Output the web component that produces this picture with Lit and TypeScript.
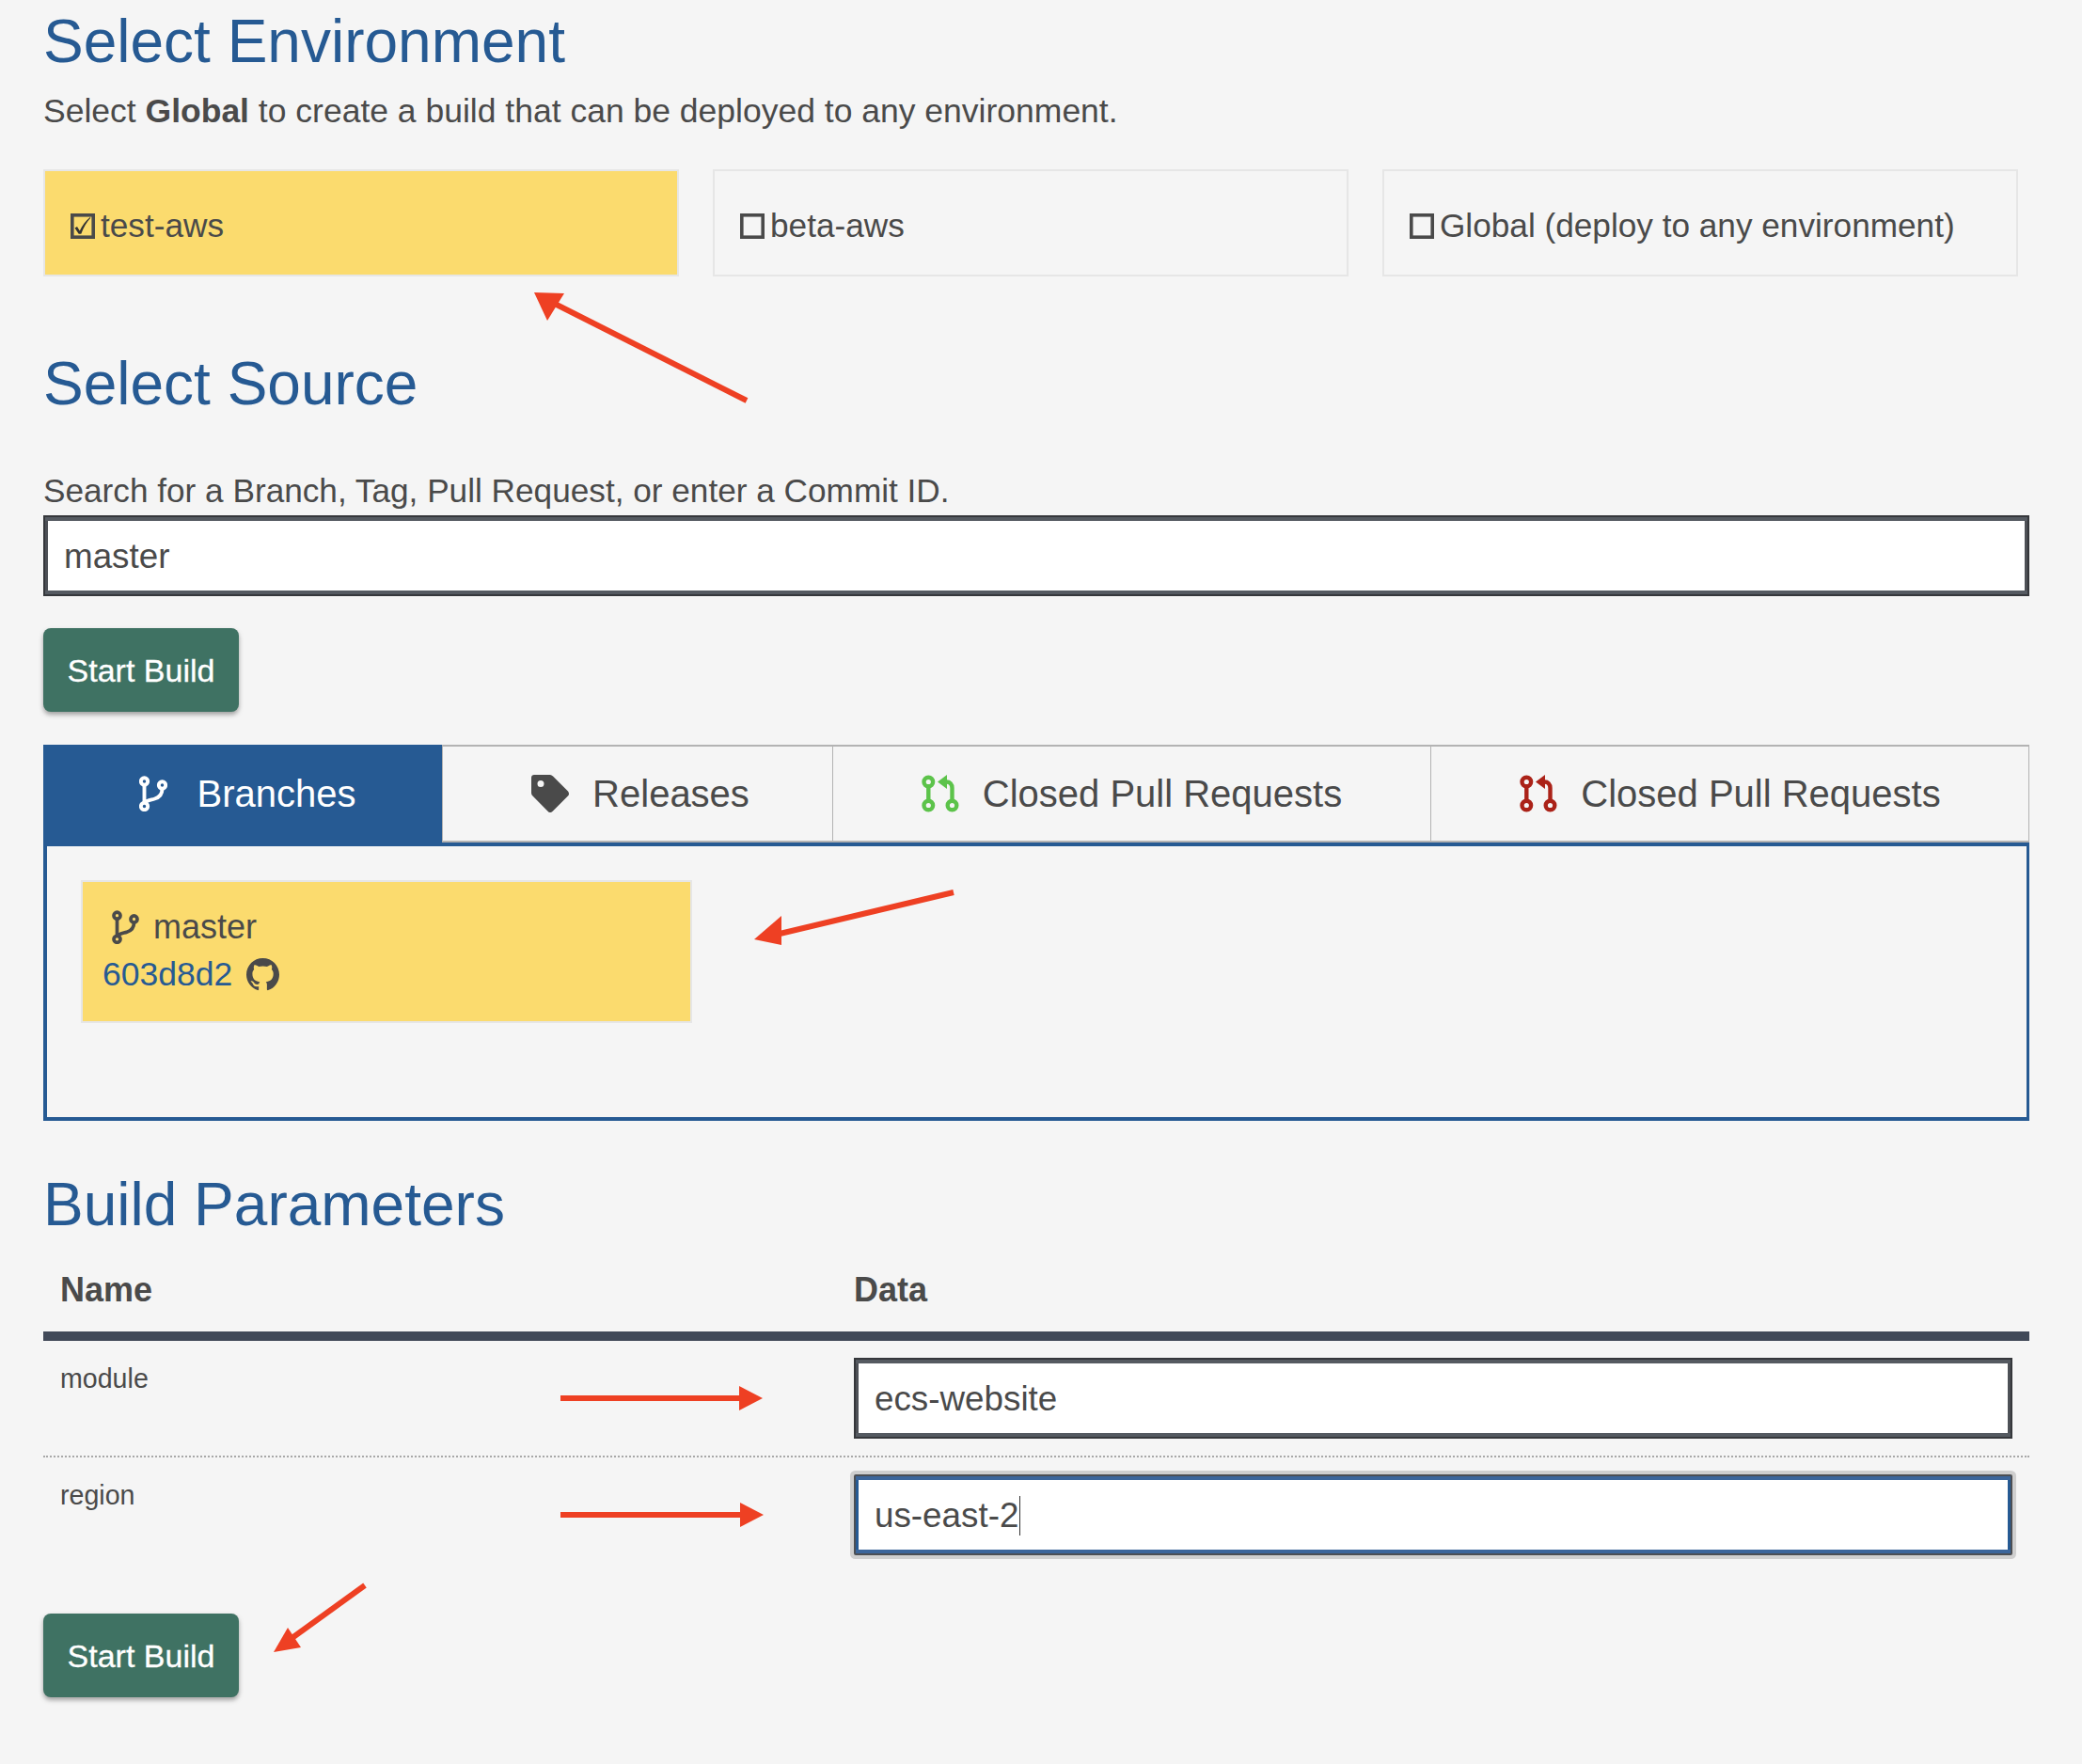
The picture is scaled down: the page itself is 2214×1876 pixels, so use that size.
import { LitElement, html, css, svg } from 'lit';
import { customElement } from 'lit/decorators.js';

const branchIcon = (w = 30, h = 38) => html`<svg class="ico" width=${w} height=${h} viewBox="0 0 30 38" fill="none" stroke="currentColor" stroke-width="3.900">
  <circle cx="5.500" cy="6" r="3.700"/><circle cx="24.500" cy="10" r="3.700"/><circle cx="5.500" cy="32.500" r="3.700"/>
  <path d="M5.500 10v18.500M24.500 14c0 6-3 9-8 10.500-5 1.500-10 2-11 5"/>
</svg>`;

const tagIcon = html`<svg class="ico" width="40" height="40" viewBox="0 0 40 40">
  <path fill="currentColor" fill-rule="evenodd" d="M3 0h17c1 0 2 .5 3 1.500l16 16c1.300 1.400 1.300 3.500.2 4.800L23 38.500c-1.500 2-4 2-5.500.2L1.500 22.500C.5 21.500 0 20.500 0 19V3c0-1.700 1.300-3 3-3zm7 6a3.500 3.500 0 100 7 3.500 3.500 0 000-7z"/>
</svg>`;

const pullIcon = (color: string) => html`<svg class="ico" width="40" height="40" viewBox="0 0 40 40" fill="none" stroke=${color} stroke-width="4.400" style="color:${color}">
  <circle cx="7.300" cy="7.500" r="4.800"/><circle cx="7.300" cy="32.500" r="4.800"/><circle cx="32.500" cy="32.500" r="4.800"/>
  <path d="M7.300 12.300v15.400M32.500 27.700V14c0-4-2.500-6.500-6-6.500h-4"/>
  <path d="M27 0v15l-10-7.500z" fill="currentColor" stroke="none"/>
</svg>`;

const githubIcon = html`<svg class="ico" width="35" height="35" viewBox="0 0 16 16">
  <path fill="currentColor" d="M8 0C3.580 0 0 3.580 0 8c0 3.540 2.290 6.530 5.470 7.590.4.070.55-.17.55-.38 0-.19-.01-.82-.01-1.490-2.010.37-2.530-.49-2.690-.94-.09-.23-.48-.94-.82-1.130-.28-.15-.68-.52-.01-.53.63-.01 1.080.58 1.230.82.72 1.210 1.870.87 2.330.66.070-.52.28-.87.51-1.070-1.780-.2-3.640-.89-3.640-3.950 0-.87.31-1.590.82-2.150-.08-.2-.36-1.020.08-2.120 0 0 .67-.21 2.200.82.64-.18 1.320-.27 2-.27.68 0 1.360.09 2 .27 1.530-1.040 2.200-.82 2.200-.82.44 1.100.16 1.920.08 2.120.51.56.82 1.270.82 2.150 0 3.070-1.870 3.750-3.650 3.950.29.25.54.73.54 1.480 0 1.070-.01 1.930-.01 2.200 0 .21.15.46.55.38A8.013 8.013 0 0016 8c0-4.420-3.580-8-8-8z"/>
</svg>`;

const checkBox = (checked: boolean) => html`<svg class="ico" width="26" height="27" viewBox="0 0 26 27" fill="none">
  <rect x="1.800" y="1.800" width="22.400" height="23.400" stroke="#4a4a4a" stroke-width="3.600"/>
  ${checked ? svg`<path d="M4.500 15.500l2.500-1.500 2.800 4.500c2.500-5.500 6-10.500 11-14.500l.5.8c-4 4.500-7.500 10-10 17h-2.600z" fill="#333"/>` : ''}
</svg>`;

// red annotation arrows, in page coordinates
const arrows = [
  { line: [794, 426, 580, 318], head: '568,311 600,312 582,341' },
  { line: [1014, 949, 825, 994], head: '802,999 831,974 831,1005' },
  { line: [596, 1487, 788, 1487], head: '811,1487 786,1474 786,1500' },
  { line: [596, 1611, 788, 1611], head: '812,1611 787,1598 787,1624' },
  { line: [388, 1686, 305, 1746], head: '291,1757 306,1731 320,1752' },
];

const envs = [
  { label: 'test-aws', checked: true },
  { label: 'beta-aws', checked: false },
  { label: 'Global (deploy to any environment)', checked: false },
];

@customElement('app-root')
export class AppRoot extends LitElement {
  static styles = css`
    :host {
      display: block;
      position: relative;
      width: 2214px;
      min-height: 1876px;
      box-sizing: border-box;
      padding: 9px 56px 0 46px;
      background: #f5f5f5;
      color: #4a4a4a;
      font-family: "Liberation Sans", Arial, sans-serif;
      font-size: 35.500px;
      line-height: 40px;
    }
    .ico { display: block; flex: none; }
    h2 {
      margin: 0;
      font-size: 64px;
      font-weight: 400;
      line-height: 70px;
      color: #265a93;
    }
    p { margin: 0; }
    .lead { margin-top: 19px; }
    .envs {
      display: grid;
      grid-template-columns: repeat(3, 676px);
      gap: 36px;
      margin-top: 42px;
    }
    .env {
      height: 114px;
      box-sizing: border-box;
      border: 2px solid #e6e6e6;
      padding: 6px 0 0 27px;
      display: flex;
      align-items: center;
      gap: 6px;
      font-size: 35.200px;
    }
    .env.on, .ref { background: #fbdb6e; }
    .source { margin-top: 79px; }
    .search-label { margin-top: 59px; font-size: 35.200px; }
    .field {
      height: 86px;
      box-sizing: border-box;
      background: #fff;
      border: 2px solid #35373b;
      box-shadow: inset 0 4px 0 #555a61, inset 0 -4px 0 #555a61, inset 3px 0 0 #4d5056, inset -3px 0 0 #4d5056;
      padding: 2px 20px 0;
      display: flex;
      align-items: center;
      font-size: 36.800px;
    }
    .search { margin-top: 6px; }
    .field.focus {
      border-color: #4c4f54;
      box-shadow: inset 0 4px 0 #3c669b, inset 0 -4px 0 #3c669b, inset 3px 0 0 #265a93, inset -3px 0 0 #265a93, 0 0 0 4px #cfcfcf;
      border-radius: 2px;
    }
    .caret { width: 1px; height: 42px; background: #333; margin-left: 1px; }
    .go {
      display: block;
      width: 208px;
      height: 89px;
      border: 0;
      padding: 2px 0 0;
      border-radius: 8px;
      background: #3f7263;
      color: #fff;
      font: 500 34px "Liberation Sans", Arial, sans-serif;
      -webkit-text-stroke: .3px #fff;
      box-shadow: 0 3px 5px rgba(0, 0, 0, .35);
    }
    .go.top { margin-top: 34px; }
    .go.bottom { margin-top: 44px; }
    .tabs {
      display: grid;
      grid-template-columns: 424px 415px 636px 637px;
      margin-top: 35px;
      height: 104px;
      box-sizing: border-box;
      border-top: 2px solid #b3b3b3;
      border-right: 1px solid #b3b3b3;
      border-bottom: 2px solid #b3b3b3;
      font-size: 40px;
    }
    .tab {
      display: flex;
      align-items: center;
      justify-content: center;
      gap: 25px;
      border-left: 1px solid #b3b3b3;
    }
    .tab.releases { padding-left: 6px; }
    .tab.active {
      background: #265a93;
      color: #fff;
      margin: -2px 0 -6px;
      padding: 0 0 4px 10px;
      border-left: 0;
      gap: 32px;
    }
    .panel {
      height: 296px;
      box-sizing: border-box;
      border: 4px solid #265a93;
      border-right-width: 3px;
      padding: 36px 0 0 36px;
    }
    .ref {
      width: 650px;
      height: 152px;
      box-sizing: border-box;
      border: 2px solid #e6e6e6;
      padding: 29px 21px 0;
      font-size: 36px;
    }
    .ref-name { display: flex; align-items: center; gap: 15px; padding-left: 10px; height: 38px; }
    .ref-commit { display: flex; align-items: center; gap: 15px; margin-top: 12px; height: 38px; }
    .ref-commit a { color: #265a93; font-size: 35.500px; text-decoration: none; }
    .params { margin-top: 54px; }
    .table { margin-top: 36px; }
    .row {
      display: grid;
      grid-template-columns: 844px 1fr;
    }
    .row > div { padding: 18px; }
    .head { border-bottom: 10px solid #414958; font-weight: 700; font-size: 36px; }
    .head > div { padding: 0 18px 24px; }
    .param { border-bottom: 2px dotted #a8a8a8; font-size: 28.600px; }
    .param:last-child { border-bottom: 0; }
    .param > div:first-child { padding-top: 20px; }
    .marks { position: absolute; inset: 0; width: 100%; height: 100%; pointer-events: none; }
  `;

  render() {
    const tabs = [
      { label: 'Branches', icon: branchIcon(), cls: 'active' },
      { label: 'Releases', icon: tagIcon, cls: 'releases' },
      { label: 'Closed Pull Requests', icon: pullIcon('#5cc34a'), cls: '' },
      { label: 'Closed Pull Requests', icon: pullIcon('#ab2218'), cls: '' },
    ];
    return html`
      <h2>Select Environment</h2>
      <p class="lead">Select <b>Global</b> to create a build that can be deployed to any environment.</p>
      <div class="envs">
        ${envs.map((e) => html`<div class="env ${e.checked ? 'on' : ''}">${checkBox(e.checked)}<span>${e.label}</span></div>`)}
      </div>

      <h2 class="source">Select Source</h2>
      <p class="search-label">Search for a Branch, Tag, Pull Request, or enter a Commit ID.</p>
      <div class="field search">master</div>
      <button class="go top">Start Build</button>

      <div class="tabs">
        ${tabs.map((t) => html`<div class="tab ${t.cls}">${t.icon}<span>${t.label}</span></div>`)}
      </div>
      <div class="panel">
        <div class="ref">
          <div class="ref-name">${branchIcon(29, 36)}<span>master</span></div>
          <div class="ref-commit"><a>603d8d2</a>${githubIcon}</div>
        </div>
      </div>

      <h2 class="params">Build Parameters</h2>
      <div class="table">
        <div class="row head"><div>Name</div><div>Data</div></div>
        <div class="row param"><div>module</div><div><div class="field">ecs-website</div></div></div>
        <div class="row param"><div>region</div><div><div class="field focus">us-east-2<span class="caret"></span></div></div></div>
      </div>
      <button class="go bottom">Start Build</button>

      <svg class="marks" viewBox="0 0 2214 1876">
        ${arrows.map((a) => svg`
          <line x1=${a.line[0]} y1=${a.line[1]} x2=${a.line[2]} y2=${a.line[3]} stroke="#ee4023" stroke-width="6"/>
          <polygon points=${a.head} fill="#ee4023"/>`)}
      </svg>
    `;
  }
}
